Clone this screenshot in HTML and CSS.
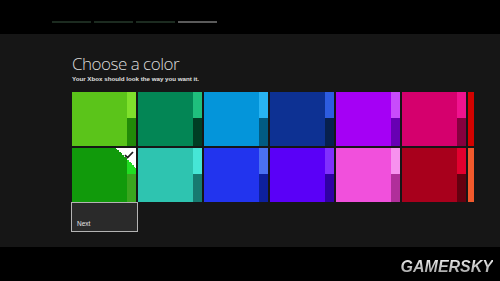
FILE: index.html
```html
<!DOCTYPE html>
<html lang="en">
  <head>
    <meta charset="UTF-8" />
    <title>Choose a color</title>
    <link rel="stylesheet" href="styles.css">
  </head>
  <body>
    <!-- Setup progress -->
    <div class="topbar">
      <div class="steps">
        <span class="step done"></span>
        <span class="step done"></span>
        <span class="step done"></span>
        <span class="step current"></span>
      </div>
    </div>

    <div class="panel">
      <h1 class="title">Choose a color</h1>
      <p class="subtitle">Your Xbox should look the way you want it.</p>

      <div class="swatches">
        <div class="row">
          <div class="tile c-lime"><div class="face"></div><div class="side"><i></i><b></b></div></div>
          <div class="tile c-emerald"><div class="face"></div><div class="side"><i></i><b></b></div></div>
          <div class="tile c-sky"><div class="face"></div><div class="side"><i></i><b></b></div></div>
          <div class="tile c-navy"><div class="face"></div><div class="side"><i></i><b></b></div></div>
          <div class="tile c-purple"><div class="face"></div><div class="side"><i></i><b></b></div></div>
          <div class="tile c-magenta"><div class="face"></div><div class="side"><i></i><b></b></div></div>
          <div class="tile c-red"><div class="face"></div></div>
        </div>
        <div class="row">
          <div class="tile c-green selected">
            <div class="face"></div><div class="side"><i></i><b></b></div>
            <div class="tick">
              <svg width="10" height="8" viewBox="0 0 10 8"><path d="M1 4.2 L3.6 6.6 L9 1" fill="none" stroke="#1a1a1a" stroke-width="1.8"/></svg>
            </div>
          </div>
          <div class="tile c-teal"><div class="face"></div><div class="side"><i></i><b></b></div></div>
          <div class="tile c-cobalt"><div class="face"></div><div class="side"><i></i><b></b></div></div>
          <div class="tile c-violet"><div class="face"></div><div class="side"><i></i><b></b></div></div>
          <div class="tile c-pink"><div class="face"></div><div class="side"><i></i><b></b></div></div>
          <div class="tile c-crimson"><div class="face"></div><div class="side"><i></i><b></b></div></div>
          <div class="tile c-orange"><div class="face"></div></div>
        </div>
      </div>

      <button class="next-btn">Next</button>
    </div>

    <div class="watermark">GAMERSKY</div>
  </body>
</html>
```

FILE: styles.css
```css
/* General */
body {
  margin: 0;
  background: #000;
  font-family: "Open Sans", "Liberation Sans", sans-serif;
  color: #ddd;
  height: 281px;
  overflow: hidden;
  position: relative;
}

/* Top progress */
.topbar {
  height: 34px;
  padding-left: 52px;
  box-sizing: border-box;
  padding-top: 21px;
}

.steps {
  display: flex;
  gap: 3px;
}

.step {
  display: block;
  width: 39px;
  height: 2px;
  background: #1c2b20;
}

.step.current {
  background: #5a5a5a;
}

/* Main panel */
.panel {
  background: #161616;
  height: 213px;
  padding-left: 72px;
  box-sizing: border-box;
  padding-top: 19px;
}

.title {
  margin: 0;
  font-size: 17px;
  font-weight: 300;
  letter-spacing: -0.5px;
  line-height: 22px;
  color: #dcdcdc;
}

.subtitle {
  margin: 0;
  font-family: "Liberation Sans", sans-serif;
  font-size: 6.2px;
  font-weight: bold;
  line-height: 8px;
  color: #e0e0e0;
}

/* Color grid */
.swatches {
  margin-top: 9px;
  width: 402px;
  overflow: hidden;
  display: flex;
  flex-direction: column;
  gap: 2px;
}

.row {
  display: flex;
  gap: 2px;
}

.tile {
  position: relative;
  flex: 0 0 64px;
  height: 54px;
  display: flex;
}

.tile .face {
  flex: 1;
  background: var(--main);
}

.tile .side {
  width: 9px;
  display: flex;
  flex-direction: column;
}

.tile .side i {
  height: 26px;
  background: var(--light);
}

.tile .side b {
  flex: 1;
  background: var(--dark);
}

.c-lime    { --main: #5bc41a; --light: #7fe02c; --dark: #218a08; }
.c-emerald { --main: #038655; --light: #1fbf7d; --dark: #003d24; }
.c-sky     { --main: #0495da; --light: #28b4f2; --dark: #015b82; }
.c-navy    { --main: #0d3193; --light: #2d5ce0; --dark: #07204f; }
.c-purple  { --main: #a500f5; --light: #c84cfb; --dark: #6700b3; }
.c-magenta { --main: #d5006d; --light: #f0138f; --dark: #86003f; }
.c-red     { --main: #d20200; }
.c-green   { --main: #119a0b; --light: #21dd22; --dark: #3aa61e; }
.c-teal    { --main: #2ec4b0; --light: #46e6d6; --dark: #177a70; }
.c-cobalt  { --main: #2234ee; --light: #4a70f2; --dark: #0d209e; }
.c-violet  { --main: #5a00f7; --light: #8030fd; --dark: #3000a4; }
.c-pink    { --main: #f150dc; --light: #f791ee; --dark: #b02f9a; }
.c-crimson { --main: #a8001c; --light: #e2002f; --dark: #640010; }
.c-orange  { --main: #f25a2c; }

/* Selected corner */
.tick {
  position: absolute;
  top: 0;
  right: 0;
  width: 20px;
  height: 20px;
  background: linear-gradient(to bottom left, #fff 50%, transparent 50%);
}

.tick svg {
  position: absolute;
  top: 3px;
  right: 2px;
}

/* Next button */
.next-btn {
  display: block;
  margin-left: -1px;
  width: 67px;
  height: 30px;
  background: #2a2a2a;
  border: 1px solid #b4b4b4;
  color: #e6e6e6;
  font-family: "Liberation Sans", sans-serif;
  font-size: 6.5px;
  text-align: left;
  padding: 13px 0 0 5px;
  box-sizing: border-box;
}

/* Watermark */
.watermark {
  position: absolute;
  right: 7px;
  bottom: 5px;
  font-family: "Liberation Sans", sans-serif;
  font-size: 16px;
  font-weight: bold;
  font-style: italic;
  color: #c8c8c8;
  background: linear-gradient(#f0f0f0, #9a9a9a);
  -webkit-background-clip: text;
  background-clip: text;
  -webkit-text-fill-color: transparent;
}
```
